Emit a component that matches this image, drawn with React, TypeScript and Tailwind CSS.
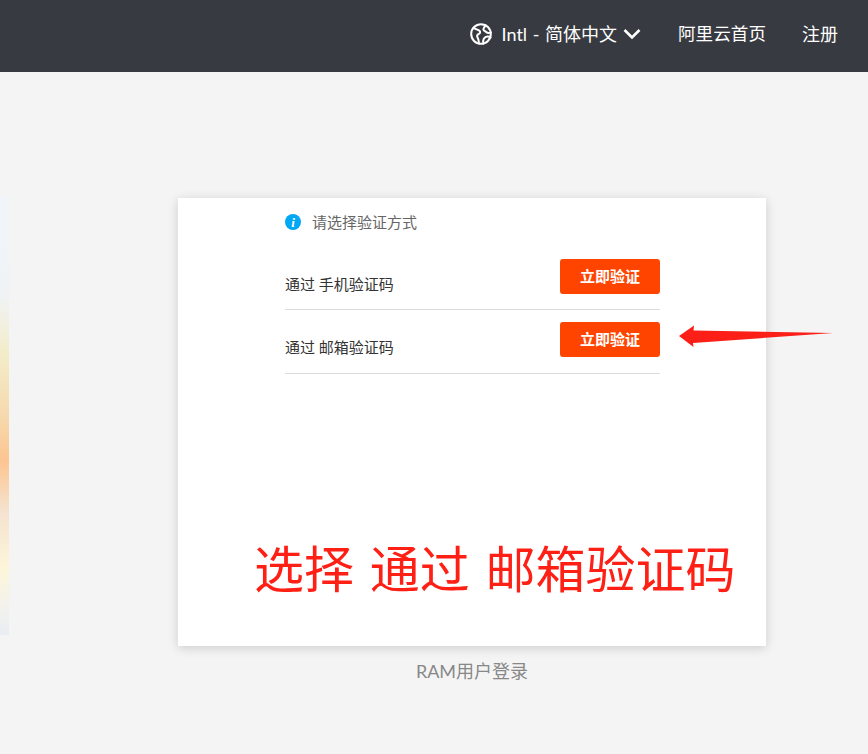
const cjk = "font-['Lato','Noto_Sans_CJK_SC',sans-serif]";

function GlobeIcon() {
  return (
    <svg viewBox="0 0 22 22" className="h-[22px] w-[22px]" fill="none" stroke="white" strokeWidth="2" strokeLinecap="round" strokeLinejoin="round">
      <circle cx="11" cy="11" r="9.8" />
      <path d="M3.6 4.8c2.2 1.4 4.4 1.8 5.9 3 1.2 1 .6 2.4-.6 3-1.3.6-2.2 1.7-1.6 3.2.5 1.2 1.4 2.2 1.4 4.2 0 .8 0 1.4.2 2" />
      <path d="M15.6 2.4c-1.2 1.6-2.4 2.6-2.2 4.2.2 1.3 1.8 1.4 2.8 2.4.9.9 3.4 1 4.6.6" />
      <path d="M13.4 20.4c-.4-1.8-.4-3.2.4-4.6.7-1.2 2-2.4 4.2-2.2.8.1 1.6.4 2.6 1" />
    </svg>
  );
}

function VerifyRow({ label, topClass }: { label: string; topClass: string }) {
  return (
    <div className={`flex h-16 items-start justify-between border-b border-[#dcdcdc] ${topClass}`}>
      <span className="mt-[15px] text-[15px] leading-[20px] text-[#333]">{label}</span>
      <button className="h-[35px] w-[100px] rounded-[3px] bg-[#ff4400] text-[15px] font-bold text-white">
        立即验证
      </button>
    </div>
  );
}

export default function App() {
  return (
    <div className={`min-h-[754px] bg-[#f4f4f4] ${cjk}`}>
      <header className="flex h-[72px] items-center justify-end bg-[#373a40] pb-[4px] pr-[30px] text-[18px] text-white">
        <GlobeIcon />
        <span className="ml-[10px] [word-spacing:1px]">Intl - 简体中文</span>
        <svg viewBox="0 0 18 12" className="ml-[6px] h-[12px] w-[18px]" fill="none" stroke="white" strokeWidth="2.6">
          <path d="M1.5 2l7.5 7.5L16.5 2" />
        </svg>
        <a className="ml-[37px] text-[17.6px]">阿里云首页</a>
        <a className="ml-[36px]">注册</a>
      </header>

      <main className="relative flex items-start pt-[125px]">
        <div className="h-[438px] w-[9px] shrink-0 bg-[linear-gradient(to_bottom,#f1f4f9_0%,#f0f3f6_22%,#f3ecc9_36%,#f6d9ae_50%,#fdc590_60%,#f4e3d0_72%,#fdf5da_85%,#f3f2ec_93%,#e9edf3_100%)]" />
        <div className="ml-[169px] mt-[1px] flex w-[588px] flex-col items-center">
          <section className="relative h-[448px] w-full bg-white pl-[107px] shadow-[0_2px_10px_rgba(0,0,0,0.16)]">
            <div className="w-[375px]">
              <div className="flex h-[48px] items-center text-[15px] text-[#666]">
                <span className="flex h-4 w-4 items-center justify-center rounded-full bg-[#00a7f5] font-['Liberation_Serif',serif] text-[13px] font-bold italic leading-none text-white">
                  i
                </span>
                <span className="ml-[11px]">请选择验证方式</span>
              </div>
              <VerifyRow label="通过 手机验证码" topClass="pt-[13px]" />
              <VerifyRow label="通过 邮箱验证码" topClass="pt-[12px]" />
            </div>
            <p className="absolute left-[76px] top-[336px] whitespace-nowrap text-[50px] leading-[70px] text-[#ff2015] [word-spacing:3px]">
              选择 通过 邮箱验证码
            </p>
            <svg viewBox="0 0 156 26" className="absolute left-[500px] top-[124px] h-[26px] w-[156px] overflow-visible">
              <path d="M1 14L16 3.5L15.5 8.5L155 11L15 21L15.5 25Z" fill="#fb1f17" />
            </svg>
          </section>
          <p className="mt-[13px] text-[18px] leading-[24px] text-[#888]">RAM用户登录</p>
        </div>
      </main>
    </div>
  );
}
